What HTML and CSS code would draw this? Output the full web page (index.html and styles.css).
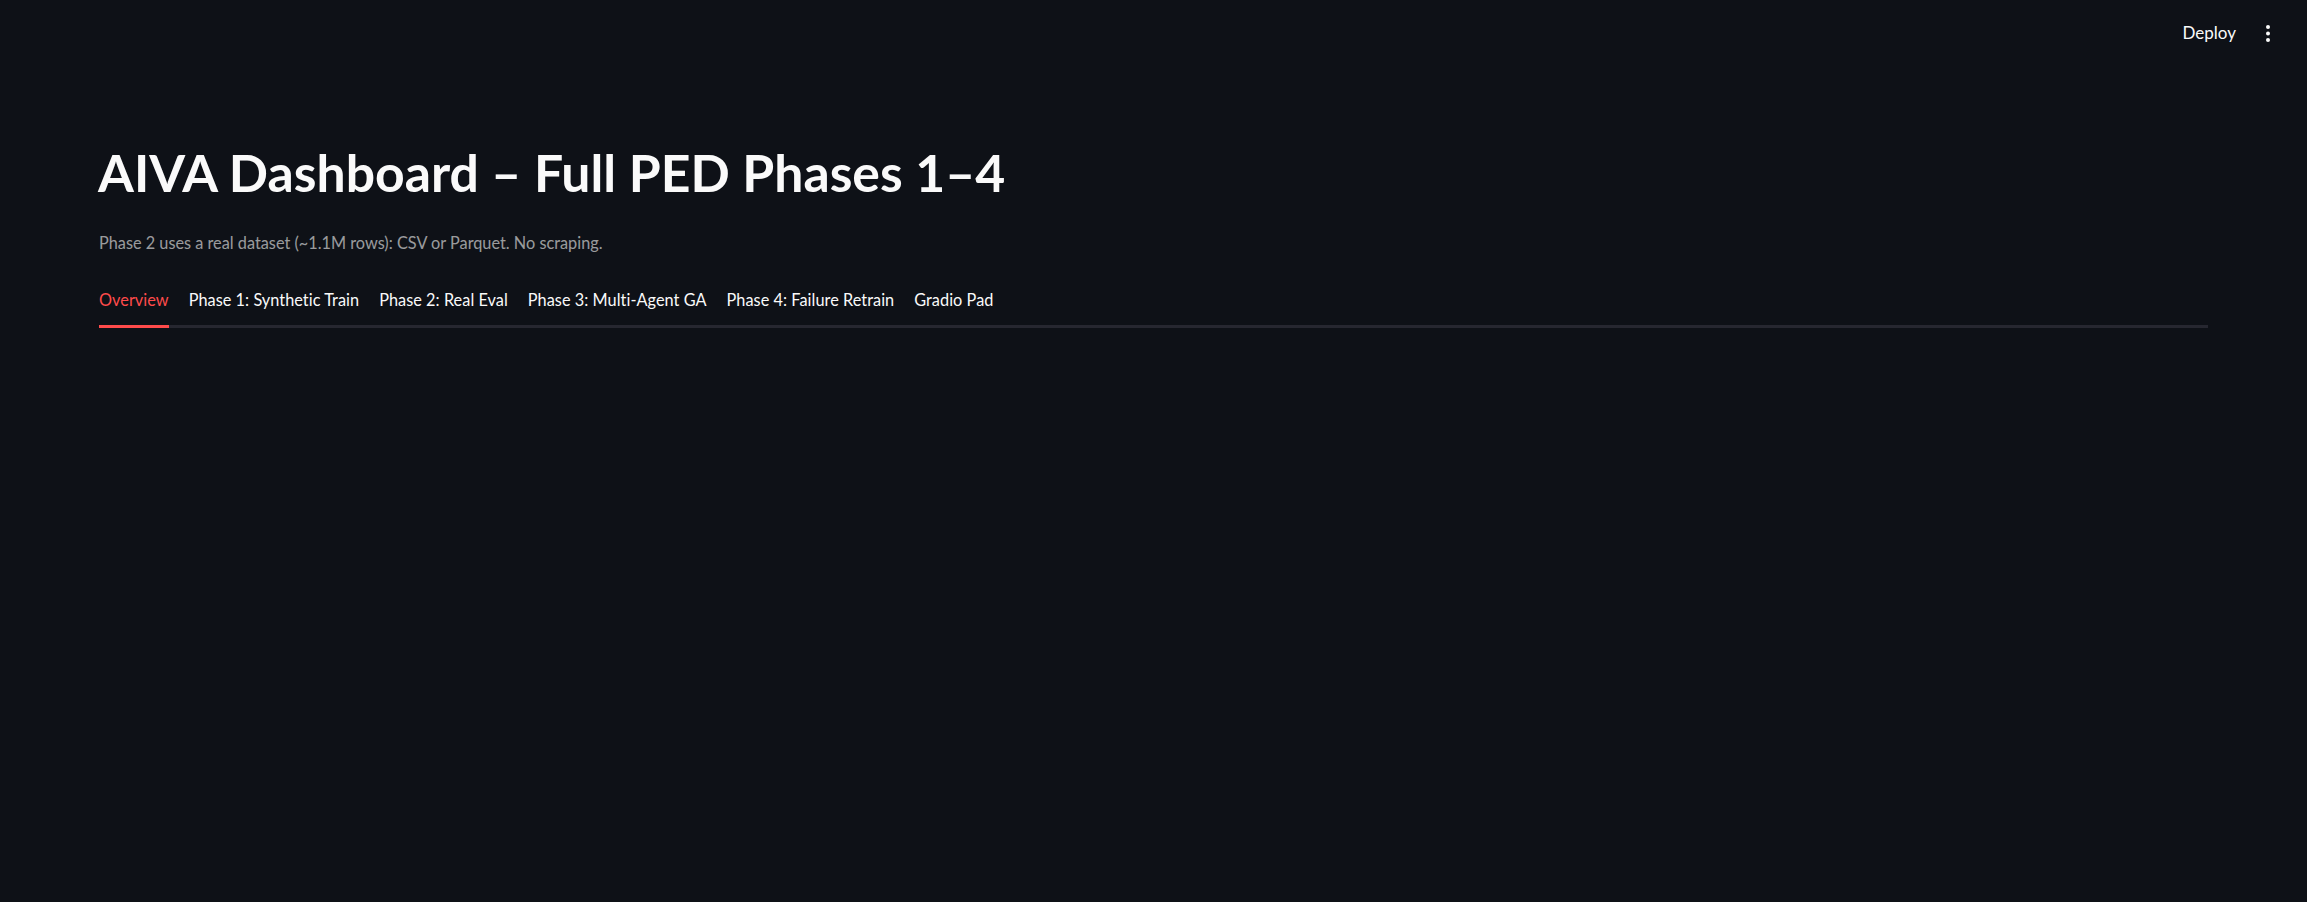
FILE: index.html
```html
<!DOCTYPE html>
<html lang="en">
<head>
<meta charset="utf-8">
<title>AIVA Dashboard</title>
<link rel="stylesheet" href="styles.css">
</head>
<body>
<header class="topbar">
  <button class="deploy">Deploy</button>
  <button class="menu" aria-label="Main menu">
    <svg width="4" height="17" viewBox="0 0 4 17"><circle cx="2" cy="2" r="2" fill="#fafafa"/><circle cx="2" cy="8.5" r="2" fill="#fafafa"/><circle cx="2" cy="15" r="2" fill="#fafafa"/></svg>
  </button>
</header>
<main class="main">
  <h1 class="title">AIVA Dashboard – Full PED Phases 1–4</h1>
  <p class="caption">Phase 2 uses a real dataset (~1.1M rows): CSV or Parquet. No scraping.</p>
  <nav class="tabs">
    <div class="tab active">Overview</div>
    <div class="tab">Phase 1: Synthetic Train</div>
    <div class="tab">Phase 2: Real Eval</div>
    <div class="tab">Phase 3: Multi-Agent GA</div>
    <div class="tab">Phase 4: Failure Retrain</div>
    <div class="tab">Gradio Pad</div>
  </nav>
</main>
</body>
</html>
```
FILE: styles.css
```css
html, body {
  margin: 0;
  padding: 0;
  background: #0e1117;
  color: #fafafa;
  font-family: Lato, "Source Sans Pro", "Noto Sans", sans-serif;
  height: 100%;
}
.topbar {
  height: 75px;
  display: flex;
  align-items: center;
  justify-content: flex-end;
  padding-right: 37px;
  gap: 30px;
}
.deploy {
  background: none;
  border: none;
  color: #fafafa;
  font-family: inherit;
  font-size: 17px;
  line-height: 1.2;
  padding: 0;
  margin-top: -8px;
}
.menu {
  background: none;
  border: none;
  padding: 0;
  display: flex;
  margin-top: -8px;
}
.main {
  padding: 66px 99px 0 99px;
}
.title {
  margin: 0;
  font-size: 51.7px;
  font-weight: 700;
  line-height: 1.2;
  margin-left: -1px;
}
.caption {
  margin: 30px 0 0 0;
  font-size: 16.3px;
  line-height: 1.2;
  color: rgba(250, 250, 250, 0.6);
}
.tabs {
  margin-top: 37px;
  display: flex;
  gap: 20px;
  border-bottom: 3px solid #262730;
}
.tab {
  font-size: 16.3px;
  letter-spacing: 0.04px;
  line-height: 1.2;
  padding-bottom: 15.5px;
  margin-bottom: -3px;
  border-bottom: 3px solid transparent;
}
.tab.active {
  color: #ff4b4b;
  border-bottom-color: #ff4b4b;
}
```
